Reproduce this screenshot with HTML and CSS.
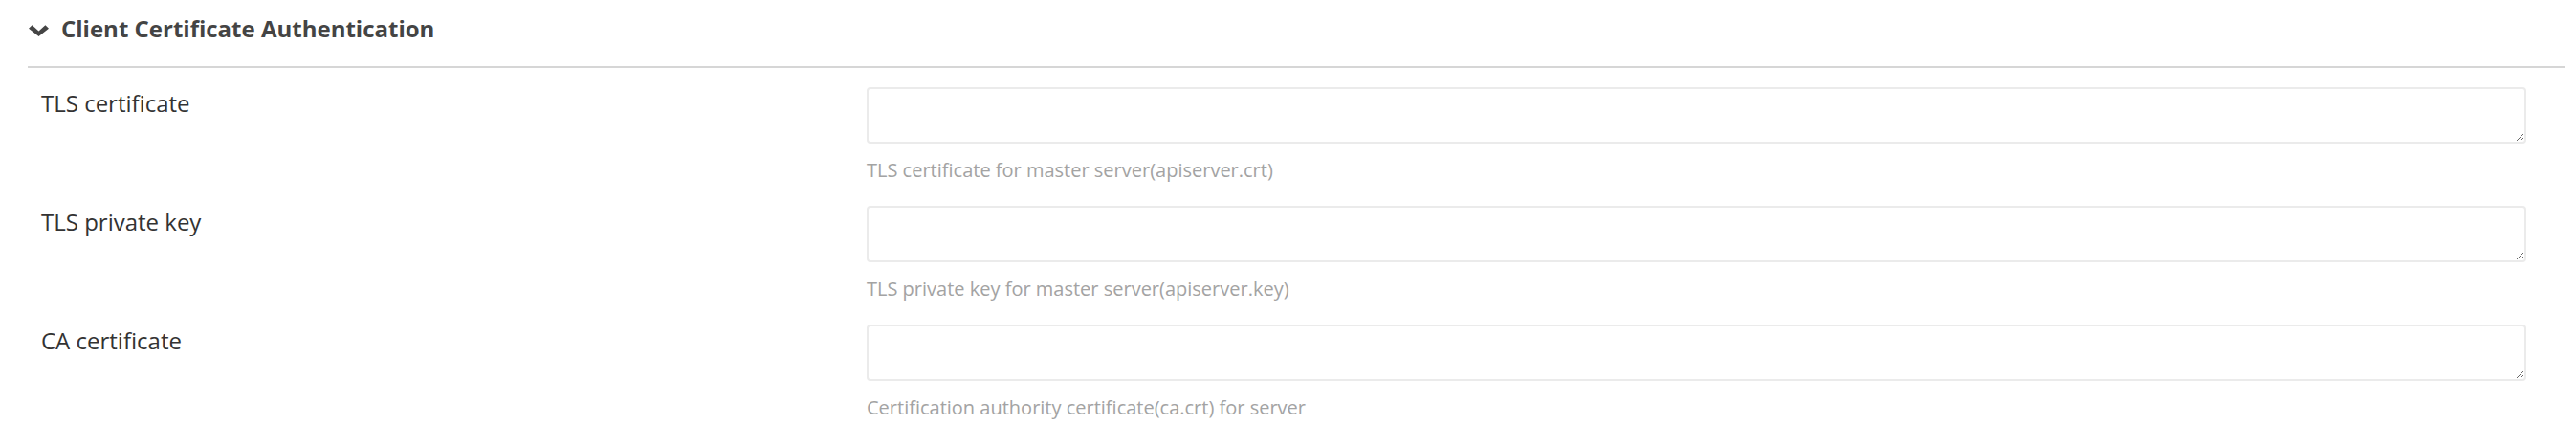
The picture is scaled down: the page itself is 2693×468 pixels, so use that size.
FILE: index.html
```html
<!DOCTYPE html>
<html lang="en">
<head>
<meta charset="utf-8">
<title>Client Certificate Authentication</title>
<link rel="stylesheet" href="styles.css">
</head>
<body>
<section class="panel">
  <div class="panel-heading">
    <svg class="chevron" width="21" height="12" viewBox="0 0 21 12" aria-hidden="true">
      <polygon points="0,3.8 3.6,0.2 10.5,6.6 17.4,0.2 21,3.8 10.5,12" fill="#454545"/>
    </svg>
    <span class="panel-title">Client Certificate Authentication</span>
  </div>
  <div class="rows">
    <div class="row">
      <label class="label" for="tls-cert">TLS certificate</label>
      <div class="field">
        <textarea id="tls-cert" class="input"></textarea>
        <div class="help">TLS certificate for master server(apiserver.crt)</div>
      </div>
    </div>
    <div class="row">
      <label class="label" for="tls-key">TLS private key</label>
      <div class="field">
        <textarea id="tls-key" class="input"></textarea>
        <div class="help">TLS private key for master server(apiserver.key)</div>
      </div>
    </div>
    <div class="row">
      <label class="label" for="ca-cert">CA certificate</label>
      <div class="field">
        <textarea id="ca-cert" class="input"></textarea>
        <div class="help">Certification authority certificate(ca.crt) for server</div>
      </div>
    </div>
  </div>
</section>
</body>
</html>
```

FILE: styles.css
```css
html, body {
  margin: 0;
  padding: 0;
  background: #ffffff;
}

body {
  font-family: "Open Sans", "Liberation Sans", sans-serif;
  color: #333333;
}

.panel {
  padding: 14px 12px 0 29px;
}

.panel-heading {
  display: flex;
  align-items: center;
  gap: 13px;
  height: 32px;
  padding: 0 0 23px 1px;
  border-bottom: 2px solid #d6d6d6;
}

.chevron {
  display: block;
  flex: none;
  margin-top: 4px;
}

.panel-title {
  font-size: 24px;
  line-height: 32px;
  font-weight: 700;
  color: #444444;
}

.rows {
  padding: 20px 0 0 14px;
}

.row {
  display: grid;
  grid-template-columns: 863px 1735px;
  margin-bottom: 23px;
}

.label {
  font-size: 24px;
  line-height: 32px;
  color: #333333;
  padding-top: 1px;
}

.field {
  display: flex;
  flex-direction: column;
}

.input {
  box-sizing: border-box;
  width: 1735px;
  height: 59px;
  margin: 0;
  border: 2px solid #ebebeb;
  border-radius: 4px;
  background: #ffffff;
  resize: vertical;
  font-family: inherit;
  outline: none;
}

.help {
  margin-top: 14px;
  font-size: 20px;
  line-height: 28px;
  color: #a3a3a3;
}
```
